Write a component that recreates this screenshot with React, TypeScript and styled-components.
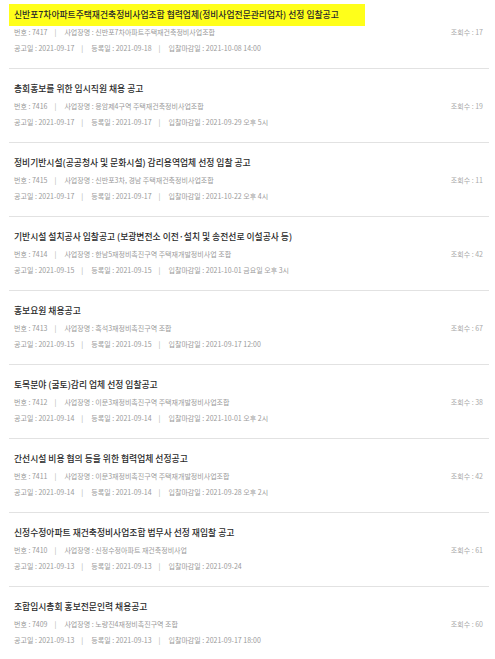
import React from "react";
import styled, { createGlobalStyle } from "styled-components";

const Global = createGlobalStyle`
  html, body {
    margin: 0;
    padding: 0;
    background: #fff;
  }
  body {
    font-family: "Noto Sans CJK KR", "Noto Sans", sans-serif;
    color: #333;
  }
`;

const List = styled.ul`
  list-style: none;
  margin: 0 6px 0 9px;
  padding: 0;
`;

const Item = styled.li`
  padding: 13px 6px 12px 5px;
  border-bottom: 1px solid #e2e2e2;
  font-size: 7px;
  line-height: 14px;
  &:first-child {
    padding-top: 8px;
  }
`;

const Title = styled.a<{ $mark?: boolean }>`
  display: block;
  width: fit-content;
  font-size: 8.8px;
  line-height: 14px;
  font-weight: 500;
  color: #2a2a2a;
  text-decoration: none;
  margin-bottom: 3px;
  background: ${(p) => (p.$mark ? "#ffff1a" : "transparent")};
  ${(p) =>
    p.$mark
      ? "padding: 4px 26px 4px 5px; margin: -4px 0 -1px -5px;"
      : "padding: 0;"}
`;

const MetaRow = styled.div`
  display: flex;
  justify-content: space-between;
  align-items: center;
  font-size: 7px;
  line-height: 15.5px;
  height: 15.5px;
  color: #9a9a9a;
`;

const Fields = styled.div`
  display: flex;
  align-items: center;
  white-space: nowrap;
`;

const Field = styled.span`
  &:not(:last-child)::after {
    content: "|";
    margin: 0 8px 0 7px;
    color: #aaa;
  }
`;

const Views = styled.span`
  color: #aaa;
`;

type Notice = {
  no: number;
  title: string;
  place: string;
  notice: string;
  reg: string;
  due: string;
  views: number;
};

const notices: Notice[] = [
  { no: 7417, title: "신반포7차아파트주택재건축정비사업조합 협력업체(정비사업전문관리업자) 선정 입찰공고", place: "신반포7차아파트주택재건축정비사업조합", notice: "2021-09-17", reg: "2021-09-18", due: "2021-10-08 14:00", views: 17 },
  { no: 7416, title: "총회홍보를 위한 임시직원 채용 공고", place: "응암제4구역 주택재건축정비사업조합", notice: "2021-09-17", reg: "2021-09-17", due: "2021-09-29 오후 5시", views: 19 },
  { no: 7415, title: "정비기반시설(공공청사 및 문화시설) 감리용역업체 선정 입찰 공고", place: "신반포3차, 경남 주택재건축정비사업조합", notice: "2021-09-17", reg: "2021-09-17", due: "2021-10-22 오후 4시", views: 11 },
  { no: 7414, title: "기반시설 설치공사 입찰공고 (보광변전소 이전·설치 및 송전선로 이설공사 등)", place: "한남5재정비촉진구역 주택재개발정비사업 조합", notice: "2021-09-15", reg: "2021-09-15", due: "2021-10-01 금요일 오후 3시", views: 42 },
  { no: 7413, title: "홍보요원 채용공고", place: "흑석3재정비촉진구역 조합", notice: "2021-09-15", reg: "2021-09-15", due: "2021-09-17 12:00", views: 67 },
  { no: 7412, title: "토목분야 (굴토)감리 업체 선정 입찰공고", place: "이문3재정비촉진구역 주택재개발정비사업조합", notice: "2021-09-14", reg: "2021-09-14", due: "2021-10-01 오후 2시", views: 38 },
  { no: 7411, title: "간선시설 비용 협의 등을 위한 협력업체 선정공고", place: "이문3재정비촉진구역 주택재개발정비사업조합", notice: "2021-09-14", reg: "2021-09-14", due: "2021-09-28 오후 2시", views: 42 },
  { no: 7410, title: "신정수정아파트 재건축정비사업조합 법무사 선정 재입찰 공고", place: "신정수정아파트 재건축정비사업", notice: "2021-09-13", reg: "2021-09-13", due: "2021-09-24", views: 61 },
  { no: 7409, title: "조합임시총회 홍보전문인력 채용공고", place: "노량진4재정비촉진구역 조합", notice: "2021-09-13", reg: "2021-09-13", due: "2021-09-17 18:00", views: 60 },
];

export default function App() {
  return (
    <>
      <Global />
      <List>
        {notices.map((n, i) => (
          <Item key={n.no}>
            <Title href="#" $mark={i === 0}>
              {n.title}
            </Title>
            <MetaRow>
              <Fields>
                <Field>번호 : {n.no}</Field>
                <Field>사업장명 : {n.place}</Field>
              </Fields>
              <Views>조회수 : {n.views}</Views>
            </MetaRow>
            <MetaRow>
              <Fields>
                <Field>공고일 : {n.notice}</Field>
                <Field>등록일 : {n.reg}</Field>
                <Field>입찰마감일 : {n.due}</Field>
              </Fields>
            </MetaRow>
          </Item>
        ))}
      </List>
    </>
  );
}
